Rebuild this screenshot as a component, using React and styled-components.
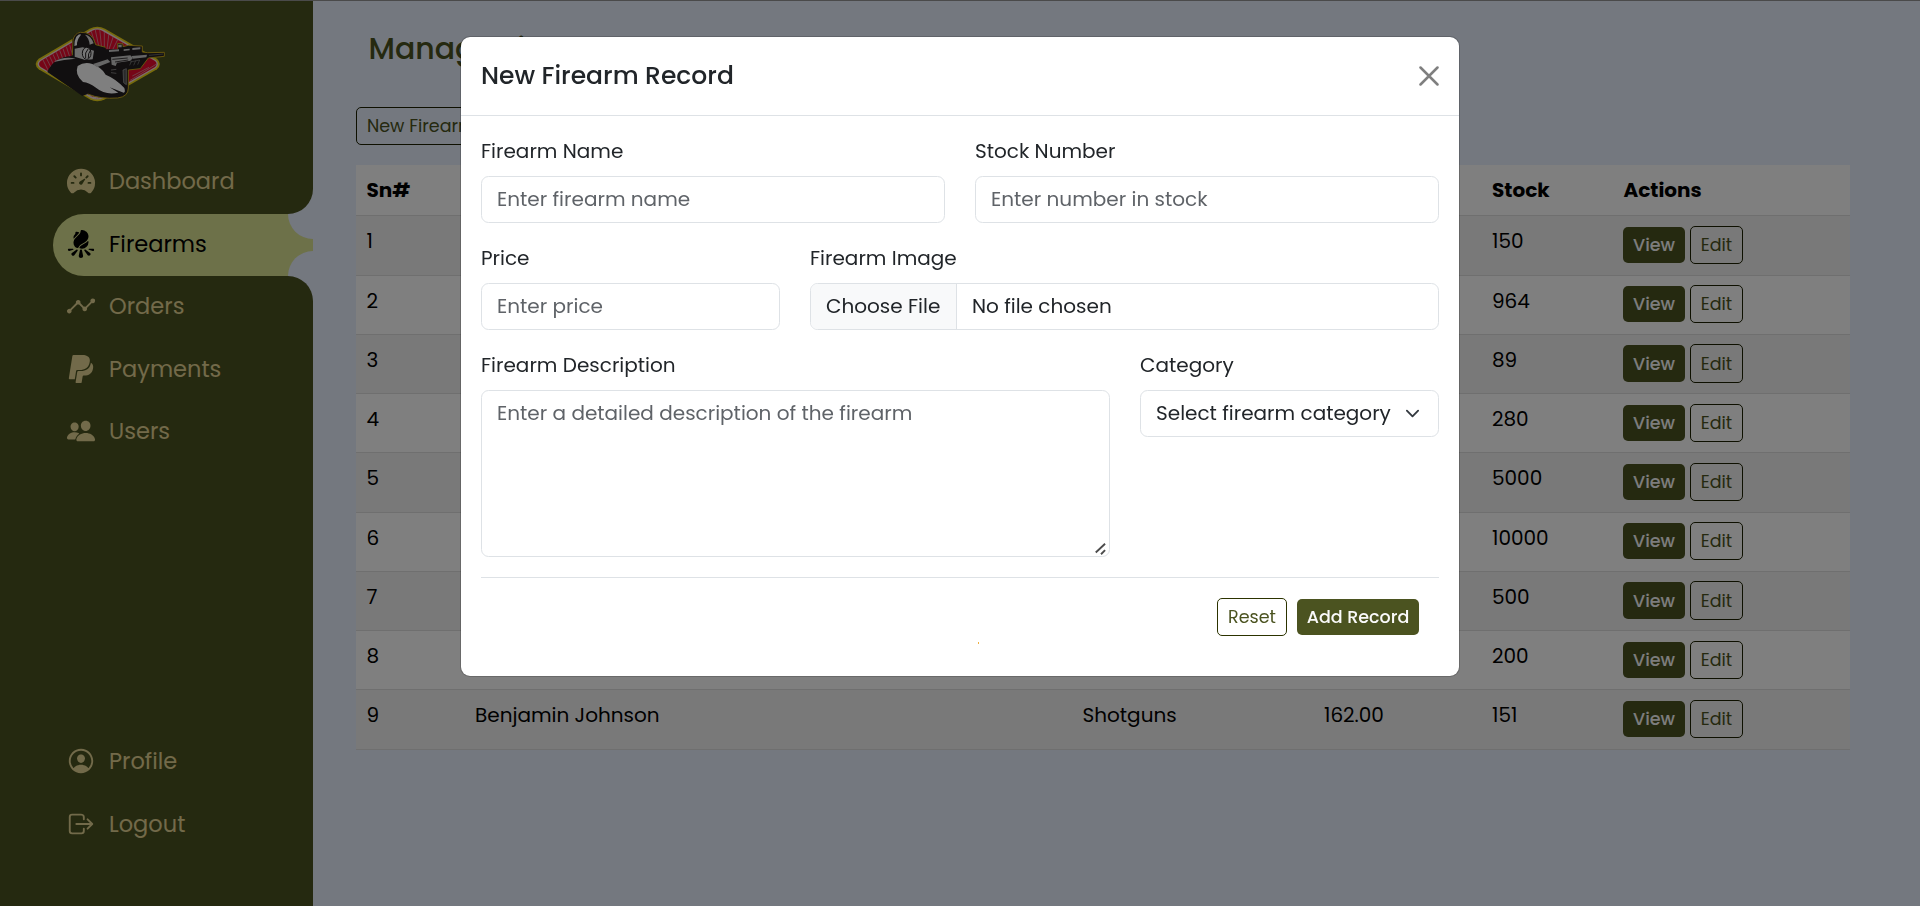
import React from "react";
import styled, { createGlobalStyle } from "styled-components";
import {
  IoSpeedometer,
  IoBonfire,
  IoAnalytics,
  IoLogoPaypal,
  IoPeople,
  IoPersonCircleOutline,
  IoLogOutOutline,
} from "react-icons/io5";

const OLIVE = "#4b5320";
const PAGE = "#e8f0ff";

const GlobalStyle = createGlobalStyle`
  *, *::before, *::after { box-sizing: border-box; }
  body {
    margin: 0;
    font-family: Poppins, Inter, "Liberation Sans", sans-serif;
    font-size: 20px;
    line-height: 30px;
    color: #212529;
    overflow: hidden;
  }
`;

const Page = styled.div`
  display: flex;
  height: 906px;
  background: ${PAGE};
  border-top: 1px solid #949494;
`;

const Sidebar = styled.aside`
  width: 313px;
  flex: none;
  display: flex;
  flex-direction: column;
  background: ${OLIVE};
  padding: 25px 0 50px 53px;
`;

const Logo = styled.svg`
  display: block;
  flex: none;
  width: 130px;
  height: 76px;
  margin-left: -18px;
`;

const Nav = styled.nav`
  display: flex;
  flex-direction: column;
  gap: 0.5px;
  margin-top: ${(p) => p.$top};
`;

const NavItem = styled.a`
  position: relative;
  display: flex;
  align-items: center;
  height: 62px;
  padding-bottom: 3px;
  border-radius: 31px 0 0 31px;
  color: ${(p) => (p.$active ? "#000" : "#e4d494")};
  background: ${(p) => (p.$active ? "#dbe393" : "transparent")};
`;

const NavIcon = styled.span`
  display: flex;
  justify-content: center;
  width: 32px;
  margin: 0 12px 0 12px;
  font-size: 30px;
`;

const Label = styled.span`
  white-space: nowrap;
`;

const NavLabel = styled(Label)`
  font-size: 22.5px;
`;

const Notch = styled.span`
  position: absolute;
  right: 0;
  width: 25px;
  height: 50px;
  overflow: hidden;
  background: ${PAGE};
  ${(p) => (p.$side === "top" ? "top: -25px;" : "bottom: -25px;")}
  border-radius: ${(p) => (p.$side === "top" ? "0 0 0 25px" : "25px 0 0 0")};

  &::before {
    content: "";
    position: absolute;
    left: 0;
    width: 25px;
    height: 25px;
    background: ${OLIVE};
    ${(p) => (p.$side === "top" ? "top: 0;" : "bottom: 0;")}
    border-radius: ${(p) => (p.$side === "top" ? "0 0 25px 0" : "0 25px 0 0")};
  }
`;

const Main = styled.main`
  flex: 1;
  padding: 27px 70px 0 43px;
`;

const Title = styled.h1`
  margin: 0 0 38px 12.5px;
  font-size: 30px;
  font-weight: 500;
  line-height: 41px;
  color: ${OLIVE};
`;

const Button = styled.button`
  display: inline-flex;
  align-items: center;
  justify-content: center;
  flex: none;
  width: ${(p) => p.$w}px;
  height: ${(p) => (p.$solid ? 36.25 : 38.25)}px;
  padding: 0;
  font-family: inherit;
  font-size: 17.5px;
  font-weight: ${(p) => (p.$solid ? 500 : 400)};
  white-space: nowrap;
  border-radius: 5px;
  border: ${(p) => (p.$solid ? "0" : `1px solid ${p.$dark ? "#1c2000" : "#2c3300"}`)};
  background: ${(p) => (p.$solid ? OLIVE : "transparent")};
  color: ${(p) => (p.$solid ? "#fafafa" : OLIVE)};
`;

const Table = styled.div`
  display: flex;
  flex-direction: column;
  margin-top: 20.15px;
`;

const Row = styled.div`
  display: grid;
  grid-template-columns: 108.5px 607.5px 241.5px 168px 131.5px 237px;
  flex: none;
  height: ${(p) => (p.$head ? 51 : 59.25)}px;
  font-weight: ${(p) => (p.$head ? 700 : 400)};
  color: #000;
  background: ${(p) => (p.$odd ? "#f2f2f2" : "#fff")};
  border-bottom: 1px solid #dedede;
`;

const Cell = styled.div`
  display: flex;
  align-items: ${(p) => (p.$center ? "center" : "flex-start")};
  gap: 5px;
  padding: ${(p) => (p.$center ? "9.5px 10px 10.5px" : "10px 10.5px")};
  white-space: nowrap;
`;

const Overlay = styled.div`
  position: fixed;
  inset: 0;
  display: flex;
  justify-content: center;
  align-items: flex-start;
  padding-top: 36px;
  background: rgba(0, 0, 0, 0.5);
`;

const Modal = styled.section`
  width: 1000px;
  height: 641px;
  background: #fff;
  background-clip: padding-box;
  border: 1px solid rgba(0, 0, 0, 0.175);
  border-radius: 10px;
`;

const ModalHeader = styled.header`
  display: flex;
  align-items: center;
  justify-content: space-between;
  height: 79px;
  padding: 0 20px 1px 20px;
  border-bottom: 1px solid #dee2e6;
`;

const ModalTitle = styled.h2`
  margin: 0;
  font-size: 25px;
  font-weight: 500;
`;

const CloseIcon = styled.svg`
  width: 20px;
  height: 20px;
  stroke: #7f7f7f;
  stroke-width: 2.5;
  stroke-linecap: round;
`;

const ModalBody = styled.div`
  display: flex;
  flex-direction: column;
  gap: 20px;
  padding: 20px 20px 0 20px;
`;

const FormRow = styled.div`
  display: grid;
  grid-template-columns: ${(p) => p.$cols};
  column-gap: 30px;
  align-items: start;
`;

const Field = styled.label`
  display: flex;
  flex-direction: column;
  gap: 10px;
`;

const Control = styled.div`
  position: relative;
  display: flex;
  align-items: ${(p) => (p.$h ? "flex-start" : "stretch")};
  height: ${(p) => p.$h || 47}px;
  border: 1px solid #dee2e6;
  border-radius: 7.5px;
  overflow: hidden;
  line-height: 45px;
`;

const Value = styled(Label)`
  flex: 1;
  padding-left: 15px;
  color: ${(p) => (p.$muted ? "#5f6368" : "#212529")};
`;

const FileButton = styled(Label)`
  width: 146px;
  padding-left: 15px;
  background: #f8f9fa;
  border-right: 1px solid #dee2e6;
`;

const Chevron = styled.svg`
  width: 15px;
  height: 15px;
  margin: 15px 18px 0 0;
  fill: none;
  stroke: #343a40;
  stroke-width: 2;
  stroke-linecap: round;
  stroke-linejoin: round;
`;

const Grip = styled.svg`
  position: absolute;
  right: 1px;
  bottom: 0;
  width: 14px;
  height: 14px;
  stroke: #4c4c4c;
  stroke-width: 1.6;
`;

const Divider = styled.div`
  height: 1px;
  background: #dee2e6;
`;

const Actions = styled.div`
  display: flex;
  justify-content: flex-end;
  align-items: center;
  gap: 10px;
  padding-right: 20px;
`;

const Spark = styled.span`
  width: 1px;
  height: 2px;
  margin: -14px 0 0 497px;
  background: #f0b040;
`;

const mainLinks = [
  { label: "Dashboard", icon: IoSpeedometer },
  { label: "Firearms", icon: IoBonfire, active: true },
  { label: "Orders", icon: IoAnalytics },
  { label: "Payments", icon: IoLogoPaypal },
  { label: "Users", icon: IoPeople },
];

const footLinks = [
  { label: "Profile", icon: IoPersonCircleOutline },
  { label: "Logout", icon: IoLogOutOutline },
];

const headings = ["Sn#", "", "", "", "Stock", "Actions"];

const records = [
  ["", "", "", "150"],
  ["", "", "", "964"],
  ["", "", "", "89"],
  ["", "", "", "280"],
  ["", "", "", "5000"],
  ["", "", "", "10000"],
  ["", "", "", "500"],
  ["", "", "", "200"],
  ["Benjamin Johnson", "Shotguns", "162.00", "151"],
];

function NavLinks({ items, top }) {
  return (
    <Nav $top={top}>
      {items.map(({ label, icon: Icon, active }) => (
        <NavItem key={label} $active={active}>
          {active && <Notch $side="top" />}
          {active && <Notch $side="bottom" />}
          <NavIcon>
            <Icon />
          </NavIcon>
          <NavLabel>{label}</NavLabel>
        </NavItem>
      ))}
    </Nav>
  );
}

function BrandLogo() {
  return (
    <Logo viewBox="104 76 390 228">
      <defs>
        <clipPath id="plate">
          <path d="M276 90Q291 83 305 90L464 181Q474 190 464 199L305 290Q291 297 276 290L121 199Q111 190 121 181Z" />
        </clipPath>
      </defs>
      <path
        d="M268 84Q291 72 314 84L470 174Q487 190 470 206L314 296Q291 308 268 296L115 206Q97 190 115 174Z"
        fill="#f0d818"
      />
      <path
        d="M271 88Q291 78 311 88L466 178Q480 190 466 202L311 292Q291 301 271 292L119 202Q104 190 119 178Z"
        fill="#f1dddd"
      />
      <g clipPath="url(#plate)">
        <path d="M100 70H500V250L390 250L330 285L250 270L100 230Z" fill="#ec0a2e" />
        <g stroke="#d8a8ae" strokeWidth="2.2">
          <path d="M128 178l20 40M138 172l20 40M148 167l18 38M158 161l16 36M168 155l14 34M178 149l12 32M188 144l10 30M198 138l10 30M208 132l8 30" />
          <path d="M272 90l16 50M284 84l12 56M298 84l6 60M312 88l0 54M326 96l-6 50M340 104l-14 42M354 113l-18 36M370 122l-22 34" />
          <path d="M388 240l84-52M396 226l50-26M290 160l30 20M284 170l30 20" />
        </g>
        <path d="M262 282l40-2M268 288l50-4M276 294l30-2" stroke="#ec0a2e" strokeWidth="2.5" strokeDasharray="3 3" />
      </g>
      <path
        d="M141 214Q160 170 214 166L216 118Q220 96 240 94Q276 92 286 132L316 140V146L352 146V128L368 130V138L384 134L426 136V154L442 156L492 155V167L444 172L420 204L384 208V262Q384 288 352 292Q300 296 262 280L246 286Z"
        fill="#221e20"
      />
      <path
        d="M216 164L218 118Q222 98 240 95Q276 92 286 132L316 140M352 144V128L368 130V138L384 134L426 136V154L442 156L492 155V167L444 172L420 204L384 208V262Q384 288 352 292Q300 296 262 280"
        fill="none"
        stroke="#c9a91c"
        strokeWidth="3"
      />
      <path d="M228 108Q238 98 242 102Q228 120 230 134L222 136Q222 118 228 108Z" fill="#fff" />
      <path d="M254 102Q272 104 280 128L268 132Q266 112 254 102Z" fill="#ddd" />
      <path d="M223 144l24-4 34 10-4 26-22 2-32-10Z" fill="#ddd" />
      <ellipse cx="259" cy="158" rx="13" ry="18" fill="#eee" stroke="#221e20" strokeWidth="3" />
      <path d="M264 144q-12 12-8 28M272 146q-10 14-8 26" stroke="#221e20" strokeWidth="3" fill="none" />
      <path
        d="M232 196Q252 182 276 190Q304 200 316 222Q346 234 372 262Q376 276 370 276L328 260L354 276Q314 284 288 262Q266 246 248 244Q222 222 232 196Z"
        fill="#fff"
      />
      <path d="M160 184Q190 166 226 174Q190 176 160 184Z" fill="#ddd" />
      <path d="M278 190l44-14 8 8-40 16Z" fill="#ccc" />
      <path d="M332 170l58-6 8 8-8 8-40 6-4 10-12-4Z" fill="#ccc" />
      <path d="M336 176l46-4M344 184l40-6" stroke="#221e20" strokeWidth="2.5" />
      <path d="M394 166l46-4-2 8-40 4ZM326 148l30-2v6l-30 2ZM370 146l18-2v5l-18 2ZM396 142l24-2v6l-24 2ZM354 132h10v8h-10Z" fill="#ccc" />
      <path d="M390 184l28-6M388 194l6-14M400 194l6-14M412 192l6-14M446 164l42-4" stroke="#888" strokeWidth="2" />
      <path d="M368 208l10-4v48l-8-6Z" fill="#555" stroke="#aaa" strokeWidth="2" />
      <path d="M332 208l16-2M332 216l16 2" stroke="#aaa" strokeWidth="2" />
    </Logo>
  );
}

export default function App() {
  return (
    <>
      <GlobalStyle />
      <Page>
        <Sidebar>
          <BrandLogo />
          <NavLinks items={mainLinks} top="49.5px" />
          <NavLinks items={footLinks} top="auto" />
        </Sidebar>
        <Main>
          <Title>Manage Firearms</Title>
          <Button $w={131} $dark>
            New Firearm
          </Button>
          <Table>
            <Row $head>
              {headings.map((text, i) => (
                <Cell key={i}>{text}</Cell>
              ))}
            </Row>
            {records.map(([name, category, price, stock], i) => (
              <Row key={i} $odd={i % 2 === 0}>
                <Cell>{i + 1}</Cell>
                <Cell>{name}</Cell>
                <Cell>{category}</Cell>
                <Cell>{price}</Cell>
                <Cell>{stock}</Cell>
                <Cell $center>
                  <Button $w={62} $solid>
                    View
                  </Button>
                  <Button $w={53} $dark>
                    Edit
                  </Button>
                </Cell>
              </Row>
            ))}
          </Table>
        </Main>
      </Page>
      <Overlay>
        <Modal>
          <ModalHeader>
            <ModalTitle>New Firearm Record</ModalTitle>
            <CloseIcon viewBox="0 0 20 20">
              <path d="M1.5 1.5l17 17M18.5 1.5l-17 17" />
            </CloseIcon>
          </ModalHeader>
          <ModalBody>
            <FormRow $cols="1fr 1fr">
              <Field>
                <Label>Firearm Name</Label>
                <Control>
                  <Value $muted>Enter firearm name</Value>
                </Control>
              </Field>
              <Field>
                <Label>Stock Number</Label>
                <Control>
                  <Value $muted>Enter number in stock</Value>
                </Control>
              </Field>
            </FormRow>
            <FormRow $cols="299px 1fr">
              <Field>
                <Label>Price</Label>
                <Control>
                  <Value $muted>Enter price</Value>
                </Control>
              </Field>
              <Field>
                <Label>Firearm Image</Label>
                <Control>
                  <FileButton>Choose File</FileButton>
                  <Value>No file chosen</Value>
                </Control>
              </Field>
            </FormRow>
            <FormRow $cols="1fr 299px">
              <Field>
                <Label>Firearm Description</Label>
                <Control $h={167}>
                  <Value $muted>Enter a detailed description of the firearm</Value>
                  <Grip viewBox="0 0 12 12">
                    <path d="M1.5 9L9.5 1.5M6 10.5L9.5 7" />
                  </Grip>
                </Control>
              </Field>
              <Field>
                <Label>Category</Label>
                <Control>
                  <Value>Select firearm category</Value>
                  <Chevron viewBox="0 0 16 16">
                    <path d="m2 5 6 6 6-6" />
                  </Chevron>
                </Control>
              </Field>
            </FormRow>
            <Divider />
            <Actions>
              <Button $w={70}>Reset</Button>
              <Button $w={122} $solid>
                Add Record
              </Button>
            </Actions>
            <Spark />
          </ModalBody>
        </Modal>
      </Overlay>
    </>
  );
}
